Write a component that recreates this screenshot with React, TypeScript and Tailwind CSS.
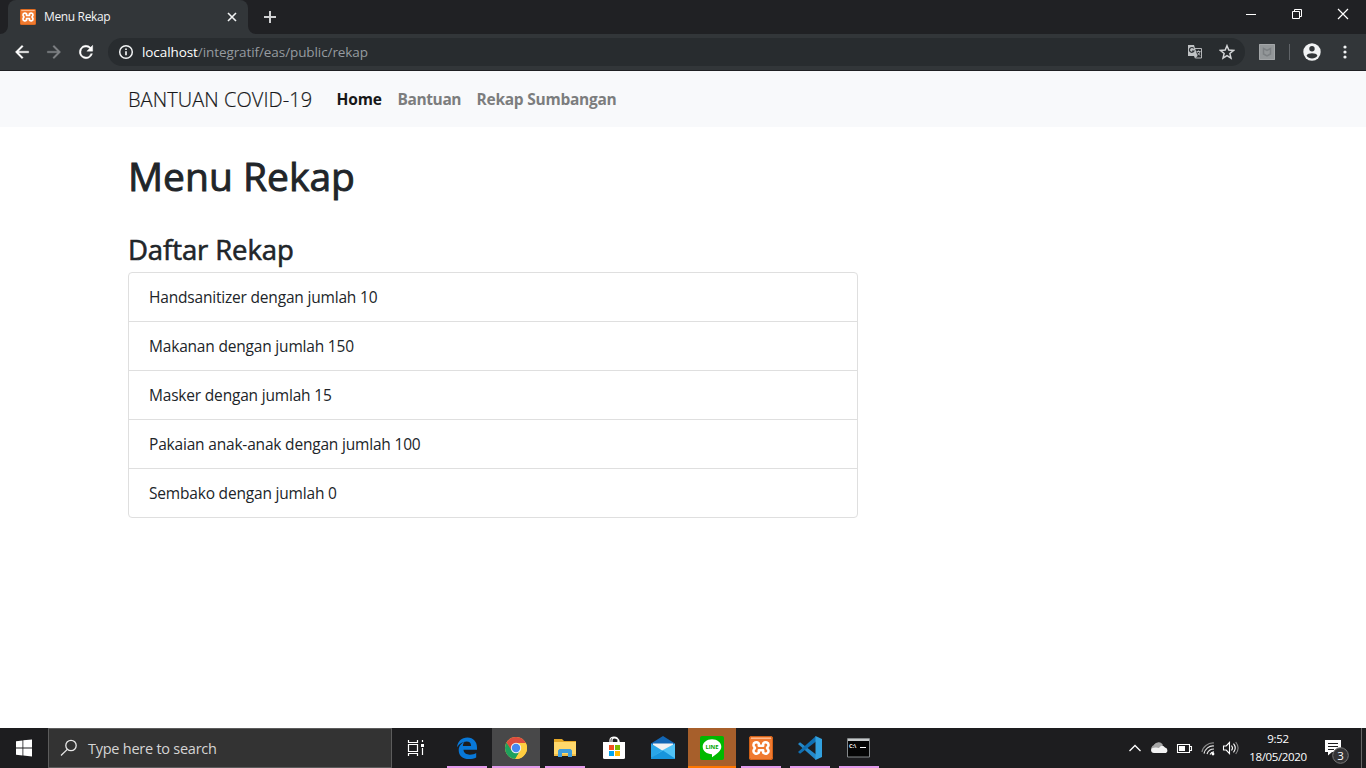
import type { ReactNode } from "react";

const items = [
  "Handsanitizer dengan jumlah 10",
  "Makanan dengan jumlah 150",
  "Masker dengan jumlah 15",
  "Pakaian anak-anak dengan jumlah 100",
  "Sembako dengan jumlah 0",
];

function XamppIcon({ size }: { size: number }) {
  return (
    <svg width={size} height={size} viewBox="0 0 24 24" className="block shrink-0">
      <rect width="24" height="24" rx="2.5" fill="#f07a30" />
      <rect x="0.5" y="0.5" width="23" height="23" rx="2" fill="none" stroke="#cf5f16" />
      <path d="M2 1.500h20v1.500H2z" fill="#ffb88a" />
      <path
        d="M9.800 9.800V7.300C7.500 5.200 4.200 6.600 4.500 9.300 4.700 10.800 6 11.200 6 12s-1.300 1.200-1.500 2.700C4.200 17.400 7.500 18.800 9.800 16.700V14.200H14.200V16.700C16.500 18.800 19.800 17.400 19.500 14.700 19.300 13.200 18 12.800 18 12s1.300-1.200 1.500-2.700C19.800 6.600 16.500 5.200 14.200 7.300V9.800Z"
        fill="none"
        stroke="#fff"
        strokeWidth="2.500"
        strokeLinejoin="round"
      />
    </svg>
  );
}

function TabStrip() {
  return (
    <div className="flex h-[34px] bg-[#202124]">
      <svg width="8" height="34" className="block shrink-0">
        <path d="M0 34a8 8 0 0 0 8-8v8Z" fill="#323639" />
      </svg>
      <div className="flex h-[34px] w-60 items-center rounded-t-lg bg-[#323639] pr-[10px] pl-3">
        <XamppIcon size={16} />
        <span className="ml-2 flex-1 text-[12px] leading-4 tracking-[-0.35px] text-[#f1f3f4]">Menu Rekap</span>
        <svg width="12" height="12" viewBox="0 0 12 12" stroke="#f1f3f4" strokeWidth="1.600">
          <path d="m2 2 8 8M10 2l-8 8" />
        </svg>
      </div>
      <svg width="8" height="34" className="block shrink-0">
        <path d="M8 34a8 8 0 0 1-8-8v8Z" fill="#323639" />
      </svg>
      <svg width="28" height="34" viewBox="0 0 28 34" stroke="#d0d1d3" strokeWidth="2">
        <path d="M8 17h12M14 11v12" />
      </svg>
      <div className="ml-auto flex">
        <svg width="46" height="30" viewBox="0 0 46 30" stroke="#fff">
          <path d="M18 14.500h10" />
        </svg>
        <svg width="46" height="30" viewBox="0 0 46 30" stroke="#fff" fill="none">
          <path d="M18.500 11.500h7v7h-7zM20.500 11.500v-2h7v7h-2" />
        </svg>
        <svg width="46" height="30" viewBox="0 0 46 30" stroke="#fff" strokeWidth="1.200">
          <path d="m18 9 10 10M28 9 18 19" />
        </svg>
      </div>
    </div>
  );
}

function Toolbar() {
  return (
    <div className="flex h-[37px] items-center border-b border-[#1f2023] bg-[#323639] pl-3">
      <svg width="20" height="20" viewBox="0 0 24 24" fill="#fff" className="block">
        <path d="M20 11H7.800l5.600-5.600L12 4l-8 8 8 8 1.400-1.400L7.800 13H20Z" stroke="#fff" strokeWidth=".4" />
      </svg>
      <svg width="20" height="20" viewBox="0 0 24 24" fill="#7f8285" className="ml-3 block">
        <path d="M4 11h12.200l-5.600-5.600L12 4l8 8-8 8-1.400-1.400 5.600-5.600H4Z" stroke="#7f8285" strokeWidth=".4" />
      </svg>
      <svg width="20" height="20" viewBox="0 0 24 24" fill="#fff" className="ml-3 block">
        <path
          d="M17.650 6.350A8 8 0 1 0 19.730 14h-2.080A6 6 0 1 1 12 6c1.660 0 3.140.69 4.220 1.780L13 11h7V4Z"
          stroke="#fff"
          strokeWidth=".5"
        />
      </svg>
      <div className="ml-3 flex h-7 w-[1137px] items-center rounded-full bg-[#282c2f] pr-[10px] pl-[10px]">
        <svg width="16" height="16" viewBox="0 0 16 16" fill="none" stroke="#f1f3f4" strokeWidth="1.500">
          <circle cx="8" cy="8" r="6.300" />
          <path d="M8 7.200v4M8 4.500v1.600" strokeWidth="1.700" />
        </svg>
        <span className="ml-2 text-[13.500px] leading-5 tracking-[-0.085px] text-[#969ba0]">
          <span className="text-white">localhost</span>/integratif/eas/public/rekap
        </span>
        <svg width="16" height="16" viewBox="0 0 16 16" className="ml-auto block">
          <path d="M7.500 4.500h7v9.500h-6" fill="none" stroke="#b4b6b9" />
          <path d="M1 1h6l3.500 11H1Z" fill="#bfc2c4" />
          <path d="M6.800 4.500A2.400 2.400 0 1 0 7 7H5" fill="none" stroke="#303438" strokeWidth="1.200" />
          <path d="M9.500 7.500h4M11.500 6.500v1M13 7.500c-.5 2-1.500 3-2.500 3.500M10.500 8.500l2.500 3" fill="none" stroke="#b4b6b9" />
          <path d="m7 12 1 2.500L10.500 12Z" fill="#bfc2c4" />
        </svg>
        <svg width="16" height="16" viewBox="0 0 24 24" className="ml-4 block" fill="none" stroke="#d4d6d8" strokeWidth="2.200">
          <path d="m12 2.500 2.700 6.600 7.100.5-5.500 4.600 1.700 7L12 17.400l-6 3.800 1.700-7-5.500-4.600 7.100-.5Z" />
        </svg>
      </div>
      <svg width="16" height="16" viewBox="0 0 16 16" className="ml-[14px] block">
        <rect width="16" height="16" rx="1" fill="#939799" />
        <path d="M.5.5h15v15H.5z" fill="none" stroke="#a3a6a8" />
        <path d="M4.500 4.500 8 6.500l3.500-2v5.500L8 12l-3.500-2Z" fill="none" stroke="#7c8083" strokeWidth="1.500" />
      </svg>
      <div className="ml-[14px] h-4 w-px bg-[#606468]" />
      <svg width="18" height="18" viewBox="0 0 18 18" className="ml-[13px] block">
        <circle cx="9" cy="9" r="8.700" fill="#f1f3f4" />
        <circle cx="9" cy="5.800" r="2.700" fill="#323639" />
        <path d="M3.600 12.700C4.600 9.500 13.400 9.500 14.400 12.700A6.500 6.500 0 0 1 3.600 12.700Z" fill="#323639" />
      </svg>
      <svg width="6" height="18" viewBox="0 0 6 18" fill="#f1f3f4" className="ml-[20.500px] block">
        <circle cx="3" cy="4" r="1.600" />
        <circle cx="3" cy="9" r="1.600" />
        <circle cx="3" cy="14" r="1.600" />
      </svg>
    </div>
  );
}

function Page() {
  return (
    <div className="flex-1 bg-white text-[#212529]">
      <nav className="flex h-14 items-center bg-[#f8f9fb] pt-[2px] pl-32">
        <span className="w-[208.500px] text-[20px] leading-[30px] font-light tracking-[0.07px] whitespace-nowrap text-[#17181a] [-webkit-text-stroke:0.2px]">
          BANTUAN COVID-19
        </span>
        <span className="w-[61px] text-[15.500px] font-bold tracking-[-0.15px] text-[#171718]">Home</span>
        <span className="w-[79px] text-[15.500px] font-bold tracking-[-0.4px] text-[#7c7d7e]">Bantuan</span>
        <span className="text-[15.500px] font-bold tracking-[-0.25px] whitespace-nowrap text-[#7c7d7e]">Rekap Sumbangan</span>
      </nav>
      <main className="w-[858px] pt-[25px] pl-32">
        <h1 className="text-[39px] leading-12 font-medium [-webkit-text-stroke:0.9px]">Menu Rekap</h1>
        <h2 className="mt-[33px] text-[27.500px] leading-[34px] font-medium tracking-[-0.1px] [-webkit-text-stroke:0.6px]">Daftar Rekap</h2>
        <ul className="mt-[5px] rounded border border-[#dfdfdf]">
          {items.map((item) => (
            <li
              key={item}
              className="h-[49px] border-b border-[#dfdfdf] px-5 pt-px text-[15.500px] leading-[47px] tracking-[-0.19px] last:h-12 last:border-b-0"
            >
              {item}
            </li>
          ))}
        </ul>
      </main>
    </div>
  );
}

type AppState = "open" | "active" | "alert" | "closed";

function TaskButton({ state, children }: { state: AppState; children: ReactNode }) {
  const bg = state === "active" ? "bg-[#484849]" : state === "alert" ? "bg-[#a75f2b]" : "";
  const bar =
    state === "open"
      ? "w-10 bg-[#e29aeb]"
      : state === "active"
        ? "w-12 bg-[#e29aeb]"
        : state === "alert"
          ? "w-12 bg-[#ff7600]"
          : "w-0";
  return (
    <div className={`mr-px flex h-10 w-12 flex-col items-center ${bg}`}>
      <div className="flex h-[38px] items-center justify-center pt-[2px]">{children}</div>
      <div className={`h-[2px] ${bar}`} />
    </div>
  );
}

function Taskbar() {
  return (
    <div className="flex h-10 bg-[#1d1d1f] text-white">
      <svg width="48" height="40" viewBox="0 0 48 40" fill="#fff" className="block shrink-0">
        <path d="M16 13.300 22.500 12.400v7.200H16ZM23.300 12.200 32 11.500v8.100h-8.700ZM16 20.500h6.500v7L16 26.700ZM23.300 20.500H32v8l-8.700-.9Z" />
      </svg>
      <div className="flex w-[344px] items-center border border-[#5c5c5c] bg-[#333] pl-[11px]">
        <svg width="18" height="18" viewBox="0 0 18 18" fill="none" stroke="#e8e8e8" strokeWidth="1.300">
          <circle cx="11" cy="6.500" r="5.200" />
          <path d="M7.300 10.400 1 16.500" />
        </svg>
        <span className="ml-[10px] pt-[2px] text-[14.500px] tracking-[-0.25px] text-[#d5d5d5]">Type here to search</span>
      </div>
      <svg width="48" height="40" viewBox="0 0 48 40" fill="none" stroke="#fff" className="mr-[3px] block shrink-0">
        <path d="M16.500 12v2.500h9V12M16.500 16.500h9v7h-9zM16.500 28v-2.500h9V28M30.500 12v2M30.500 20v7" strokeWidth="1.200" />
        <path d="M29 16h3v3h-3z" fill="#fff" stroke="none" />
      </svg>
      <TaskButton state="open">
        <svg width="22" height="24" viewBox="0 0 22 24" fill="#0878d8">
          <path d="M1 11.200C1.800 5 5.700 1.500 11.400 1.500c6 0 9.600 4.300 9.600 10.200v2.100H7.500c.2 3.300 3 4.900 6.400 4.900 2.500 0 4.700-.7 6.300-1.700v4.500c-2 1.100-4.500 1.600-7.300 1.600-6.100 0-10.200-3.300-10.200-8.900 0-4.100 2.300-6.900 5.700-8.300-1 1.200-1.400 2.400-1.500 4h8.200c0-2.900-1.500-4.300-4.600-4.300C6.700 5.600 3.400 7.800 1 11.200Z" />
        </svg>
      </TaskButton>
      <TaskButton state="active">
        <svg width="22" height="22" viewBox="0 0 22 22">
          <circle cx="11" cy="11" r="11" fill="#ffcd40" />
          <path d="M1.500 5.500a11 11 0 0 0 8.800 16.500L15.300 13.500 11 11 5.900 11Z" fill="#1fa15d" />
          <path d="M11 6h9.800A11 11 0 0 1 10.300 22l5.100-8.500Z" fill="#ffcd40" />
          <path d="M1.500 5.500A11 11 0 0 1 20.800 6H11l-4.600 7.300Z" fill="#dc4c3f" />
          <circle cx="11" cy="11" r="5.200" fill="#f1f1f1" />
          <circle cx="11" cy="11" r="4.200" fill="#4688f1" />
        </svg>
      </TaskButton>
      <TaskButton state="open">
        <svg width="22" height="20" viewBox="0 0 22 20">
          <path d="M0 1h8l2 2h12v5H0Z" fill="#e5a827" />
          <path d="M0 4h22v14H0Z" fill="#ffd86b" />
          <path d="M0 16h22v2H0Z" fill="#f1bd46" />
          <path d="M4 12.500 5.500 11h11l1.500 1.500V19h-4v-4H8v4H4Z" fill="#409ddb" />
        </svg>
      </TaskButton>
      <TaskButton state="closed">
        <svg width="24" height="24" viewBox="0 0 24 24">
          <path d="M8 7V4c0-4 8-4 8 0v3M10 7V4c0-4 8-2 7 3" fill="none" stroke="#fff" strokeWidth="1.200" />
          <path d="M1 6h22v15.500q0 1.500-1.500 1.500h-19Q1 23 1 21.500Z" fill="#fff" />
          <path d="M7 9h5v5H7z" fill="#f25022" />
          <path d="M13 9h5v5h-5z" fill="#7fba00" />
          <path d="M7 15h5v5H7z" fill="#00a4ef" />
          <path d="M13 15h5v5h-5z" fill="#ffb900" />
        </svg>
      </TaskButton>
      <TaskButton state="closed">
        <svg width="24" height="24" viewBox="0 0 24 24">
          <path d="M0 7.500 12 0l12 7.500V12H0Z" fill="#1266b4" />
          <path d="M2 7.500h20V13l-10 5L2 13Z" fill="#f2f2f2" />
          <path d="M0 7.500 12 15 0 22Z" fill="#29a6e8" />
          <path d="M24 7.500V23H0v-1L12 14Z" fill="#51c3f6" />
          <path d="M0 22 12 14.500 24 22.500v.5H0Z" fill="#1795dd" />
        </svg>
      </TaskButton>
      <TaskButton state="alert">
        <svg width="24" height="24" viewBox="0 0 24 24">
          <rect width="24" height="24" rx="2" fill="#00b900" />
          <path d="M12 3.300c5.200 0 9.300 3.300 9.300 7.500 0 3.800-4.500 7.500-9.300 10.400v-3c-5.200 0-9.300-3.300-9.300-7.400S6.800 3.300 12 3.300Z" fill="#fff" />
          <text x="12" y="13.200" textAnchor="middle" fontSize="5.800" fontWeight="bold" fill="#00a400">LINE</text>
        </svg>
      </TaskButton>
      <TaskButton state="open">
        <XamppIcon size={24} />
      </TaskButton>
      <TaskButton state="open">
        <svg width="24" height="24" viewBox="0 0 24 24">
          <path d="M0 8 2 6.200 18 18.500V24Z" fill="#2489ca" />
          <path d="M0 16 2 17.800 18 5.500V0Z" fill="#1070b3" />
          <path d="M17.500 0 24 3v18l-6.500 3Z" fill="#32a1df" />
        </svg>
      </TaskButton>
      <TaskButton state="open">
        <svg width="24" height="20" viewBox="0 0 24 20">
          <path d="M.5.5h22v18.500H.5z" fill="#050505" stroke="#85898b" />
          <path d="M1 1h21v2H1z" fill="#c6c9ca" />
          <text x="2" y="9.500" fontSize="5.500" fontWeight="bold" fill="#fff">C:\</text>
          <path d="M13 9.500h6" stroke="#fff" />
        </svg>
      </TaskButton>
      <div className="ml-auto flex items-center">
        <svg width="14" height="40" viewBox="0 0 14 40" fill="none" stroke="#fff" strokeWidth="1.300">
          <path d="m1.500 23 5.500-5.500 5.500 5.500" />
        </svg>
        <svg width="18" height="40" viewBox="0 0 18 40" className="ml-2">
          <path d="M1 22a3.300 3.300 0 0 1 2.500-3.200A4.500 4.500 0 0 1 12 17.500 4.400 4.400 0 0 1 15 19.500 3 3 0 0 1 16 25H4a3.200 3.200 0 0 1-3-3Z" fill="#f2f2f2" />
          <path d="M1.500 20.500A3.500 3.500 0 0 1 4.300 17 4.700 4.700 0 0 1 13 17.500c-2 .1-3 1-4 2.500-2-.8-5-.8-7.500.5Z" fill="#a6a6a6" />
        </svg>
        <svg width="17" height="40" viewBox="0 0 17 40" className="ml-2" fill="none" stroke="#fff">
          <path d="M1.500 16.500h12v8h-12zM13.500 18.500h2v4h-2" strokeWidth="1.100" />
          <path d="M3 18h6v5H3z" fill="#fff" stroke="none" />
        </svg>
        <svg width="15" height="40" viewBox="0 0 15 40" className="ml-2" fill="none" strokeWidth="1.200">
          <path d="M1 24C1.500 19 7 14.500 13 15" stroke="#888" />
          <path d="M3 25.500C4 21 8 17.500 13 18M6 26c1-3 3.500-5 7-5" stroke="#e6e6e6" />
          <path d="M9 26.500c.8-1.500 2-2.700 4-2.700" stroke="#fff" />
          <circle cx="12" cy="26" r="1.400" fill="#fff" />
        </svg>
        <svg width="18" height="40" viewBox="0 0 18 40" className="ml-[6px]" fill="none" stroke="#fff" strokeWidth="1.100">
          <path d="M1.500 18h2.700L7.500 14.500v11L4.200 22H1.500ZM9.500 17.500q2 2.500 0 5M11.500 15.700q3.500 4.300 0 8.600" />
          <path d="M13.700 14q4.800 6 0 12" stroke="#888" />
        </svg>
        <div className="ml-[6px] flex w-[64px] flex-col items-center text-[11.500px] leading-[18px] tracking-[-0.35px] whitespace-nowrap">
          <span>9:52</span>
          <span>18/05/2020</span>
        </div>
        <svg width="28" height="40" viewBox="0 0 28 40" className="ml-[14px]">
          <path d="M1 12h16v12H8l-4 3.500V24H1Z" fill="#fff" />
          <path d="M4 15.500h10M4 18.500h10M4 21.500h6" stroke="#1d1d1f" />
          <circle cx="16.500" cy="27.500" r="7.800" fill="#343436" stroke="#777" />
          <text x="16.500" y="31.500" textAnchor="middle" fontSize="11.500" fill="#fff">3</text>
        </svg>
        <div className="ml-[9px] h-10 w-px bg-[#666]" />
        <div className="w-1" />
      </div>
    </div>
  );
}

export default function App() {
  return (
    <div className="flex h-[768px] w-[1366px] flex-col overflow-hidden bg-white font-['Open_Sans','Noto_Sans',sans-serif]">
      <TabStrip />
      <Toolbar />
      <Page />
      <Taskbar />
    </div>
  );
}
